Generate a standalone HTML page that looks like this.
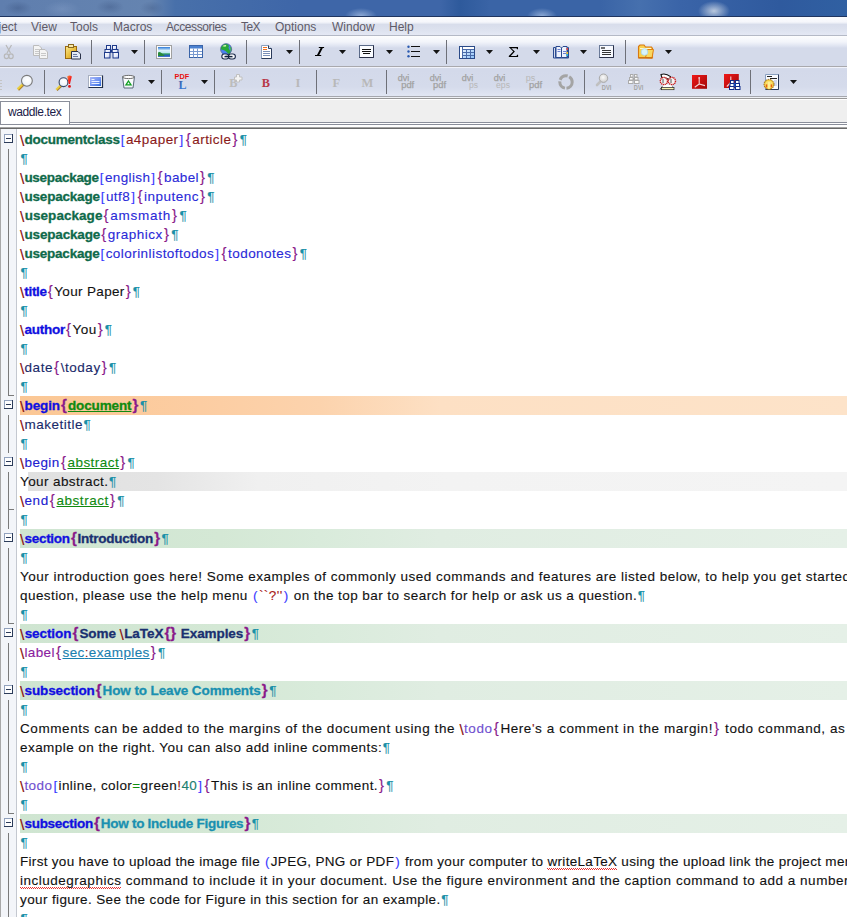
<!DOCTYPE html>
<html><head><meta charset="utf-8">
<style>
*{margin:0;padding:0;box-sizing:border-box}
html,body{width:847px;height:917px;overflow:hidden;background:#fff}
body{position:relative;font-family:"Liberation Sans",sans-serif}
.abs{position:absolute}
#title{left:0;top:0;width:847px;height:16px;
 background:
  radial-gradient(ellipse 16px 8px at 361px 16px,rgba(175,198,232,.7),rgba(175,198,232,0)),
  radial-gradient(ellipse 15px 8px at 542px 16px,rgba(175,198,232,.7),rgba(175,198,232,0)),
  radial-gradient(ellipse 16px 10px at 714px 11px,rgba(200,212,228,.9),rgba(200,212,228,0)),
  radial-gradient(ellipse 14px 7px at 18px 8px,rgba(60,85,130,.45),rgba(60,85,130,0)),
  radial-gradient(ellipse 14px 7px at 110px 7px,rgba(60,85,130,.4),rgba(60,85,130,0)),
  radial-gradient(ellipse 12px 7px at 152px 8px,rgba(60,85,130,.35),rgba(60,85,130,0)),
  radial-gradient(ellipse 18px 8px at 62px 9px,rgba(140,165,205,.35),rgba(140,165,205,0)),
  linear-gradient(90deg,#5f7eae 0,#6584b0 150px,#4870aa 175px,#3e66a8 300px,#3e66a8 440px,#2e5a9c 460px,#3a64a6 490px,#3a64a6 600px,#4670ae 640px,#3a64a8 680px,#2f5a9e 780px,#3060a2 847px);}
#tline{left:0;top:16px;width:847px;height:1px;background:#1f3560}
#menu{left:0;top:17px;width:847px;height:18px;background:linear-gradient(#fbfcfe 0px,#f5f6fb 5px,#e4e8f2 6.5px,#d8ddeb 7.5px,#dce1ee 12px,#e4e8f4 18px)}
#mline{left:0;top:35px;width:847px;height:1px;background:#b4b9c6}
.mi{position:absolute;top:20px;font-size:12px;color:#5f5b68;white-space:nowrap}
#tb1{left:0;top:36px;width:847px;height:30px;
 background:linear-gradient(#fdfdfe 0px,#f2f4fa 6px,#dfe4f1 10px,#d4dAea 12px,#d4daea 30px)}
#tb1line{left:0;top:66px;width:847px;height:1px;background:#a9a9ad}
#tb2{left:0;top:67px;width:847px;height:29px;background:linear-gradient(#f0f2fa 0px,#f0f2fa 1px,#d6dcec 1px,#d3d9ea 3px,#d5dbeb 20px,#e1e6f3 29px)}
#tb2line{left:0;top:96px;width:847px;height:1px;background:#a5a7ad}
#tabarea{left:0;top:97px;width:847px;height:30px;background:#fff}
.sep{position:absolute;width:1px;height:22px;background:#8a8e98}
.dd{position:absolute;width:0;height:0;border-left:3.5px solid transparent;border-right:3.5px solid transparent;border-top:4px solid #151515}
#editor{left:0;top:129px;width:847px;height:788px;background:#fff}
#gutter{left:0;top:129px;width:17px;height:788px;background:#f3f5f9;border-left:1px solid #a8a8a8;border-right:1px solid #c4c8d0}
.row{-webkit-text-stroke:0.12px currentColor;position:absolute;left:20px;height:19px;width:827px;white-space:pre;font-size:13.5px;line-height:19px;--d:0px;letter-spacing:calc(0.42px + var(--d));color:#111}

.row b{-webkit-text-stroke:0.3px currentColor;font-weight:bold;letter-spacing:calc(-0.25px + var(--d))}
.bs{color:#8a1010;font-size:15.5px;line-height:1px;position:relative;top:1.5px;padding-right:0;margin-right:-0.3px}
.dg{color:#0f6a4a}
.ob{color:#3a3aff;padding:0 0.97px}
.mr{color:#8a1a1a}
.pu{color:#8a1a8a;font-size:15px;line-height:1px;padding:0 1.1px}
.bl{color:#2a2ad8}
.kb{color:#1010e0}
.nv{color:#1a2a6a}
.bb{color:#2020d0}
.env{color:#108a10;text-decoration:underline}
.sn{color:#1a3070}
.lb{color:#8a20a0}
.ref{color:#1a80b0;text-decoration:underline}
.ss{color:#1a90b0}
.td{color:#7050d0}
.gr{color:#109010}
.tl{color:#208070}
.rd{color:#a82020}
.pm{color:#1a90a8;letter-spacing:0;padding-left:0.6px}
.sq{background-image:repeating-linear-gradient(90deg,#e83030 0 1px,transparent 1px 2px),repeating-linear-gradient(90deg,transparent 0 1px,#e83030 1px 2px);background-size:100% 1px,100% 1px;background-position:0 13.6px,0 14.6px;background-repeat:no-repeat;padding-bottom:3px}
.hl{position:absolute;height:19px}
</style></head>
<body>
<div id="title" class="abs"></div>
<div id="tline" class="abs"></div>
<div id="menu" class="abs"></div>
<div id="mline" class="abs"></div>
<div class="mi" style="left:-1.5px">ject</div>
<div class="mi" style="left:31px">View</div>
<div class="mi" style="left:70px">Tools</div>
<div class="mi" style="left:113px">Macros</div>
<div class="mi" style="left:166px;letter-spacing:-0.4px">Accessories</div>
<div class="mi" style="left:241px;letter-spacing:-0.6px">TeX</div>
<div class="mi" style="left:275px">Options</div>
<div class="mi" style="left:332px">Window</div>
<div class="mi" style="left:389px">Help</div>

<div id="tb1" class="abs"></div>
<div id="tb1line" class="abs"></div>
<div id="tb2" class="abs"></div>
<div id="tb2line" class="abs"></div>
<div id="tabarea" class="abs"></div>
<div class="abs" style="left:0;top:97px;width:847px;height:1px;background:#eef0f4"></div>
<div class="abs" style="left:0;top:98px;width:847px;height:1px;background:#979797"></div>
<div class="abs" style="left:70px;top:100px;width:777px;height:22px;background:#efefef"></div>
<div class="abs" style="left:69px;top:122px;width:778px;height:1px;background:#8a8e9a"></div>
<div class="abs" style="left:0;top:101px;width:70px;height:23px;background:#fff;border-left:1px solid #8a8e9a;border-top:1px solid #8a8e9a;border-right:1px solid #8a8e9a"></div>
<div class="abs" style="left:8px;top:105px;font-size:12px;letter-spacing:-0.4px;color:#1c1c48;white-space:nowrap">waddle.tex</div>
<div class="abs" style="left:0;top:124px;width:847px;height:1px;background:#8a8e9a"></div>
<div class="abs" style="left:0;top:127px;width:847px;height:1px;background:#a4a4a4"></div>
<div class="abs" style="left:0;top:128px;width:847px;height:1px;background:#6a6a6a"></div>

<!-- TOOLBAR -->
<svg class="abs" style="left:0;top:0" width="847" height="130" viewBox="0 0 847 130">
<defs>
 <linearGradient id="gSky" x1="0" y1="0" x2="0" y2="1"><stop offset="0" stop-color="#2a78d8"/><stop offset=".35" stop-color="#d8f0fa"/><stop offset=".55" stop-color="#c0e8f0"/><stop offset=".7" stop-color="#2a9a60"/><stop offset=".85" stop-color="#2a60c0"/><stop offset="1" stop-color="#4a7ad0"/></linearGradient>
 <linearGradient id="gBin" x1="0" y1="0" x2="0" y2="1"><stop offset="0" stop-color="#ffffff"/><stop offset="1" stop-color="#f0f4fa"/></linearGradient>
 <linearGradient id="gWin" x1="0" y1="0" x2="1" y2="1"><stop offset="0" stop-color="#a8b8f8"/><stop offset=".6" stop-color="#6a8ef0"/><stop offset="1" stop-color="#2a68d8"/></linearGradient>
 <linearGradient id="gBarrel" x1="0" y1="0" x2="1" y2="1"><stop offset="0" stop-color="#ffffff"/><stop offset=".6" stop-color="#e8ecfa"/><stop offset="1" stop-color="#9aa8e8"/></linearGradient>
 <linearGradient id="gCell" x1="0" y1="0" x2="1" y2="1"><stop offset="0" stop-color="#ffffff"/><stop offset="1" stop-color="#8ac0f8"/></linearGradient>
 <linearGradient id="gGold" x1="0" y1="0" x2="1" y2="1"><stop offset="0" stop-color="#fae890"/><stop offset=".5" stop-color="#eac040"/><stop offset="1" stop-color="#c89020"/></linearGradient>
 <linearGradient id="gRed" x1="0" y1="0" x2="1" y2="1"><stop offset="0" stop-color="#f01818"/><stop offset="1" stop-color="#a00808"/></linearGradient>
 <linearGradient id="gL" x1="0" y1="0" x2="0" y2="1"><stop offset="0" stop-color="#3a58a0"/><stop offset="1" stop-color="#3a80e0"/></linearGradient>
 <radialGradient id="gLens" cx=".55" cy=".4" r=".65"><stop offset="0" stop-color="#ffffff"/><stop offset=".7" stop-color="#f0f4fa"/><stop offset="1" stop-color="#c8d8f0"/></radialGradient>
 <radialGradient id="gLensG" cx=".45" cy=".4" r=".7"><stop offset="0" stop-color="#fafafa"/><stop offset="1" stop-color="#c8c8c8"/></radialGradient>
 <linearGradient id="gHandle" x1="0" y1="0" x2="1" y2="1"><stop offset="0" stop-color="#d8d860"/><stop offset=".5" stop-color="#f0c838"/><stop offset="1" stop-color="#603010"/></linearGradient>
 <linearGradient id="gExcl" x1="0" y1="0" x2="1" y2="1"><stop offset="0" stop-color="#f89040"/><stop offset=".6" stop-color="#f81818"/><stop offset="1" stop-color="#c01010"/></linearGradient>
 <linearGradient id="gFolder" x1="0" y1="0" x2="0" y2="1"><stop offset="0" stop-color="#fcd890"/><stop offset="1" stop-color="#e89828"/></linearGradient>
</defs>
<!-- separators -->
<g fill="#6e7078">
 <rect x="91" y="40" width="1" height="24"/><rect x="144" y="40" width="1" height="24"/>
 <rect x="246" y="40" width="1" height="24"/><rect x="299" y="40" width="1" height="24"/>
 <rect x="446" y="40" width="1" height="24"/><rect x="625" y="40" width="1" height="24"/>
 <rect x="44" y="70" width="1" height="24"/><rect x="161" y="70" width="1" height="24"/>
 <rect x="214" y="70" width="1" height="24"/><rect x="316" y="70" width="1" height="24"/>
 <rect x="386" y="70" width="1" height="24"/><rect x="584" y="70" width="1" height="24"/>
 <rect x="750" y="70" width="1" height="24"/>
</g>
<!-- dropdown arrows -->
<g fill="#141414">
 <path d="M131 50h7l-3.5 4z"/><path d="M286 50h7l-3.5 4z"/><path d="M339 50h7l-3.5 4z"/>
 <path d="M386 50h7l-3.5 4z"/><path d="M433 50h7l-3.5 4z"/><path d="M486 50h7l-3.5 4z"/>
 <path d="M533 50h7l-3.5 4z"/><path d="M580 50h7l-3.5 4z"/><path d="M665 50h7l-3.5 4z"/>
 <path d="M148 80h7l-3.5 4z"/><path d="M201 80h7l-3.5 4z"/><path d="M790 80h7l-3.5 4z"/>
</g>
<!-- scissors disabled -->
<g fill="none" stroke="#b8b8b8" stroke-width="1.2">
 <path d="M6 45 L10.5 53 M11.5 45 L7 53"/>
 <ellipse cx="6.5" cy="56.3" rx="2.2" ry="2.4"/><ellipse cx="11" cy="56.3" rx="2.2" ry="2.4"/>
</g>
<!-- copy disabled -->
<g stroke="#bcbcbc" stroke-width="1" fill="#f4f4f4">
 <path d="M33.5 45.5h5.5l2.5 2.5v7.5h-8z"/>
 <path d="M39.5 49.5h5.5l2.5 2.5v6.5h-8z"/>
</g>
<g stroke="#c8c8c8" stroke-width="1"><path d="M35 49.5h4M35 51.5h4M35 53.5h4M41 53.5h5M41 55.5h5"/></g>
<!-- paste -->
<rect x="65.5" y="46.5" width="11" height="12" fill="url(#gGold)" stroke="#9a6a10"/>
<rect x="68.5" y="44.5" width="5" height="3" fill="#f8e8a8" stroke="#8a6a20"/>
<path d="M71.5 51.5h6.5l2.5 2.5v5h-9z" fill="#e4ecf8" stroke="#2a3248"/>
<path d="M73 54.5h4M73 56.5h5" stroke="#6a7aa0"/>
<!-- binoculars -->
<g stroke="#1e3a8a" stroke-width="1" fill="url(#gBarrel)">
 <rect x="106.5" y="45.5" width="4" height="4"/><rect x="112.5" y="45.5" width="4" height="4"/>
 <rect x="105" y="49.5" width="5.5" height="3"/><rect x="112" y="49.5" width="6" height="3"/>
 <rect x="104.5" y="52.5" width="5.5" height="5.5"/><rect x="113" y="52.5" width="5.5" height="5.5"/>
</g>
<rect x="110" y="50" width="2.5" height="2.5" fill="#1e3a8a"/>
<!-- image -->
<rect x="156.5" y="45.5" width="15" height="13" fill="#fcfcfc" stroke="#a0a0a0"/>
<rect x="158" y="47" width="12" height="10" fill="url(#gSky)"/>
<path d="M158 52.5q2 -1.5 4 1 l3 2.5h-7z" fill="#2a8a3a"/>
<!-- table -->
<rect x="189.5" y="45.5" width="13" height="12" fill="#fff" stroke="#3a64a8"/>
<rect x="190" y="46" width="12" height="2.5" fill="#4a80d0"/>
<path d="M190 51.5h12M190 54.5h12M193.5 48.5v9M197.5 48.5v9" stroke="#7a9ad0"/>
<!-- globe with chain -->
<circle cx="226.1" cy="49.2" r="5.6" fill="#4a80f0"/>
<path d="M221 47.5q1.5 -3.5 5 -3.5 q2.5 0 3 2 q-1 1.5 0 3 l1.5 2.5 q0 2 -1.5 3 q-1.5 -2 -3.5 -3.5 q-2 -1.5 -4.5 -1.5z" fill="#28a838"/>
<path d="M222.5 46.2q1.5 -1.5 3.5 -1.2 q.8 1 -.8 1.8z" fill="#d0f8b0"/>
<path d="M230 47q1.5 2 .8 4" stroke="#40c040" stroke-width="1.2" fill="none"/>
<circle cx="226.1" cy="49.2" r="5.6" fill="none" stroke="#4a5a7a" stroke-width=".6"/>
<g fill="#f4f6fa" stroke="#1a2a48" stroke-width="1.1"><rect x="221.8" y="54" width="7" height="5" rx="2.5"/><rect x="228.4" y="54" width="7" height="5" rx="2.5"/></g>
<path d="M224.5 56.5h8" stroke="#10203a" stroke-width="1.6"/>
<path d="M223.5 55.3h2M230 55.3h3.5" stroke="#fff" stroke-width=".8"/>
<!-- document -->
<path d="M261.5 45.5h7l3 3v10h-10z" fill="#fff" stroke="#8aa0c0"/>
<path d="M271.5 48.5v10h-10" fill="none" stroke="#2a3a5a"/>
<path d="M268.5 45.5v3h3" fill="#dde4ee" stroke="#2a3a5a"/>
<path d="M263 47.5h4M263 49.5h4" stroke="#f07020" stroke-width="1.1"/>
<path d="M263 51.5h7M263 53.5h7M263 55.5h7" stroke="#7a90b8"/>
<!-- italic I -->
<path d="M318.8 47h5.3v1h-5.3z M315 55h6.2v1h-6.2z M320.6 48h2.2l-3.6 7h-2.2z" fill="#000"/>
<!-- align box -->
<rect x="359.5" y="45.5" width="14" height="12" fill="#fafcff" stroke="#5a6a88"/>
<path d="M373.5 45.5v12h-14" fill="none" stroke="#2a3048"/>
<path d="M362 49.5h9M362 51.5h9M363 53.5h7" stroke="#111"/>
<!-- list -->
<g fill="#2a5ab0"><circle cx="408.5" cy="46.8" r="1.2"/><circle cx="408.5" cy="51.5" r="1.2"/><circle cx="408.5" cy="56.2" r="1.2"/></g>
<path d="M411 46.5h9M411 51.5h9M411 56.5h9" stroke="#111" stroke-width="1.2"/>
<!-- table blue -->
<rect x="459.5" y="46.5" width="15" height="12" fill="url(#gCell)" stroke="#2a4a88"/>
<path d="M460 49.5h14M460 52.5h14M460 55.5h14M462.5 47v11M466.5 49v9M470.5 49v9" stroke="#4a6aa8" stroke-width="1"/>
<rect x="460" y="47" width="2" height="11" fill="#fff"/>
<rect x="463" y="47" width="11" height="2" fill="#fff"/>
<!-- sigma -->
<path d="M509 47h9v2.2h-.9l-.6-1h-5.2l3.6 3.4-4.1 4.3h5.7l.7-1.2h.9v2.3h-9.3v-.9l4.4-4.6-4.4-4.5z" fill="#000"/>
<!-- book -->
<path d="M553.5 47.5h2v10h12v-10h1v10.5h-15z" fill="none" stroke="#2a4a90"/>
<path d="M556 46.5h4l1.5 1.5v9.5h-5.5z" fill="#eef2fc" stroke="#2a4a90"/>
<path d="M561.5 48l1.5 -1.5h4v11h-5.5z" fill="#eef2fc" stroke="#2a4a90"/>
<path d="M557.5 49.5h3M557.5 51.5h3M563 51.5h3M563 53.5h3" stroke="#6a80d0"/>
<rect x="566.5" y="48" width="1.5" height="2" fill="#e04040"/><rect x="566.5" y="52" width="1.5" height="2" fill="#f0c020"/><rect x="566.5" y="54" width="1.5" height="2" fill="#20b0e0"/>
<!-- lines box -->
<rect x="599.5" y="45.5" width="14" height="12" fill="#f8faff" stroke="#6a7a98"/>
<path d="M613.5 45.5v12h-14" fill="none" stroke="#2a3048"/>
<path d="M601 48h4" stroke="#111" stroke-width="1.2"/>
<path d="M602 50.5h9M602 52.5h9M602 54.5h9" stroke="#333"/>
<!-- folder -->
<path d="M638.5 46.5l1.5 -1.5h4l1.5 2h6l1 1.5v9.5h-14z" fill="#f8d050" stroke="#d87810" stroke-width="1.1"/>
<path d="M640 48.5h11" stroke="#fff8d0" stroke-width="1"/>
<path d="M645.5 57.5l2 -8h6l-1.5 8.5z" fill="#f8d860" stroke="#e08010" stroke-width="1"/>
<circle cx="644.5" cy="52" r="3.3" fill="#d8f4fc" stroke="#a8d8f0" stroke-width=".8"/>
<path d="M639 57.8h13" stroke="#c86808" stroke-width="1.1"/>
<!-- TB2 -->
<g fill="#c4c4c4"><rect x="0" y="80" width="2" height="1"/><rect x="0" y="83" width="2" height="1"/><rect x="0" y="86" width="2" height="1"/><rect x="0" y="89" width="2" height="1"/></g>
<!-- magnifier -->
<path d="M19 88.5l3.5 -3.5" stroke="url(#gHandle)" stroke-width="3.2" stroke-linecap="square"/>
<circle cx="26.9" cy="80.8" r="5.4" fill="url(#gLens)" stroke="#7a7a7a" stroke-width="1.1"/>
<!-- magnifier ! -->
<path d="M57.5 89l3 -3" stroke="url(#gHandle)" stroke-width="3" stroke-linecap="square"/>
<circle cx="63.5" cy="82.2" r="4.4" fill="url(#gLens)" stroke="#3a4a68" stroke-width="1.1"/>
<path d="M67.2 76.5q2.3 -2 4.6 0l-1.8 7.5h-1.2z" fill="url(#gExcl)"/>
<circle cx="69.5" cy="86.4" r="1.4" fill="#e01818"/>
<!-- blue window -->
<rect x="88.5" y="75.5" width="14" height="12" fill="#fff" stroke="#a8b0c0"/>
<path d="M102.5 75.5v12h-14" fill="none" stroke="#22304a" stroke-width="1.2"/>
<rect x="90" y="77" width="11" height="9" fill="url(#gWin)"/>
<path d="M91.5 79.5h3M91.5 81.5h8M91.5 83.5h8" stroke="#e8f0ff"/>
<!-- recycle bin -->
<path d="M122.5 76.5h12l-1.5 11.5h-9z" fill="url(#gBin)" stroke="#5a6a7a"/>
<ellipse cx="128.5" cy="77" rx="6" ry="1.6" fill="#fff" stroke="#6a6a6a"/>
<path d="M128.5 81l2.5 3.8h-5z" fill="none" stroke="#10a020" stroke-width="1.3"/>
<!-- PDF L -->
<text x="174.6" y="79.1" font-family="Liberation Sans" font-weight="bold" font-size="7.6" fill="#e81010" textLength="14.6" lengthAdjust="spacingAndGlyphs">PDF</text>
<text x="178.5" y="88.8" font-family="Liberation Serif" font-weight="bold" font-size="12" fill="url(#gL)">L</text>
<!-- B+ disabled -->
<text x="229.3" y="86.8" font-family="Liberation Serif" font-weight="bold" font-size="12.3" fill="#bcbcbc">B</text>
<path d="M236.5 74.5h3v2.5h2.5v3h-2.5v2h-3v-2h-2v-3h2z" fill="#f4f4f4" stroke="#c0c0c0"/>
<!-- B red -->
<text x="261.8" y="86.8" font-family="Liberation Serif" font-weight="bold" font-size="12.3" fill="#b83848">B</text>
<text x="295.5" y="86.6" font-family="Liberation Serif" font-weight="bold" font-size="12.5" fill="#b8b8b8">I</text>
<text x="332.5" y="86.6" font-family="Liberation Serif" font-weight="bold" font-size="12.5" fill="#b8b8b8">F</text>
<text x="361.5" y="86.6" font-family="Liberation Serif" font-weight="bold" font-size="12.5" fill="#b8b8b8">M</text>
<!-- dvi labels -->
<g font-family="Liberation Sans" font-size="8.5" fill="#a2a2a2" stroke="#a2a2a2" stroke-width=".25">
 <text x="397.8" y="80.6" textLength="11.5" lengthAdjust="spacingAndGlyphs">dvi</text><text x="401.2" y="87.6" textLength="13" lengthAdjust="spacingAndGlyphs">pdf</text>
 <text x="429.8" y="80.6" textLength="11.5" lengthAdjust="spacingAndGlyphs">dvi</text><text x="433" y="87.6" textLength="13" lengthAdjust="spacingAndGlyphs">pdf</text>
 <text x="461.8" y="80.6" textLength="11.5" lengthAdjust="spacingAndGlyphs">dvi</text><text x="469" y="87.6" fill="#b8b8b8" stroke="none" textLength="9" lengthAdjust="spacingAndGlyphs">ps</text>
 <text x="493.8" y="80.6" textLength="11.5" lengthAdjust="spacingAndGlyphs">dvi</text><text x="496" y="87.6" fill="#b8b8b8" stroke="none" textLength="14" lengthAdjust="spacingAndGlyphs">eps</text>
 <text x="525.7" y="80.6" fill="#b8b8b8" stroke="none" textLength="9.5" lengthAdjust="spacingAndGlyphs">ps</text><text x="529" y="87.6" textLength="13" lengthAdjust="spacingAndGlyphs">pdf</text>
</g>
<circle cx="566" cy="82" r="6.2" fill="none" stroke="#a4a4a4" stroke-width="3" stroke-dasharray="9 1.6"/>
<!-- magnifier DVI disabled -->
<path d="M597 85l3 -3" stroke="#c0c0c0" stroke-width="2.6" stroke-linecap="round"/>
<circle cx="603.5" cy="78.2" r="4.2" fill="url(#gLensG)" stroke="#a8a8a8"/>
<text x="601.8" y="89.8" font-family="Liberation Sans" font-weight="bold" font-size="6.5" fill="#a4a4a4" textLength="9.5" lengthAdjust="spacingAndGlyphs">DVI</text>
<!-- binoculars DVI disabled -->
<g fill="#fafafa" stroke="#ababab" stroke-width="1">
 <rect x="630.5" y="74.5" width="2.5" height="2.5"/><rect x="634.5" y="74.5" width="2.5" height="2.5"/>
 <rect x="629.5" y="77.5" width="3.5" height="2.5"/><rect x="634.5" y="77.5" width="3.5" height="2.5"/>
 <rect x="628.5" y="80.5" width="4.5" height="3"/><rect x="634.5" y="80.5" width="4.5" height="3"/>
</g>
<rect x="633" y="78" width="1.5" height="2.5" fill="#a8a8a8"/>
<text x="633.8" y="89.8" font-family="Liberation Sans" font-weight="bold" font-size="6.5" fill="#a4a4a4" textLength="9.5" lengthAdjust="spacingAndGlyphs">DVI</text>
<!-- red glasses -->
<path d="M661 74.5 q5 -1.5 9.5 2.2 l-1 3 q-3 -2 -7.5 -1.5z" fill="#fff" stroke="#111" stroke-width="1.1"/>
<path d="M663 85.5 l-2.8 4 M672 85.5 l1.2 3" stroke="#222" stroke-width="1"/>
<path d="M662.5 85q5 -1 10 0v2.5h-10z" fill="#fff"/>
<rect x="661.5" y="87.5" width="12.5" height="2.2" fill="#f8f4b0" stroke="#222" stroke-width=".7"/>
<circle cx="663.9" cy="81" r="3.6" fill="#f4f4f4" stroke="#c81818" stroke-width="1.4" stroke-dasharray="1.2 .6"/>
<circle cx="671.9" cy="81" r="3.6" fill="#f4f4f4" stroke="#c81818" stroke-width="1.4" stroke-dasharray="1.2 .6"/>
<path d="M663 79v4M671 79v4" stroke="#444" stroke-width=".9"/>
<!-- adobe -->
<rect x="692" y="75" width="15" height="13.8" fill="url(#gRed)"/>
<path d="M699.2 77.8v6.2 M699.2 84l-4.5 3.2 M699.2 84l5.8 1.6" fill="none" stroke="#f4d4d4" stroke-width="1.1"/>
<circle cx="699.2" cy="77.8" r=".9" fill="#f0c8d0"/>
<!-- adobe binoculars -->
<rect x="724" y="74" width="14.8" height="14" fill="url(#gRed)"/>
<path d="M730.8 76.5v6 M730.8 82.5l-4 4" fill="none" stroke="#f4d4d4" stroke-width="1.1"/>
<g stroke="#102a88" stroke-width="1" fill="#ffffff">
 <rect x="730.5" y="80.5" width="3.5" height="3"/><rect x="735.5" y="80.5" width="3.5" height="3"/>
 <rect x="730" y="83.5" width="4" height="3"/><rect x="735.5" y="83.5" width="4" height="3"/>
 <rect x="729.5" y="86.5" width="4.5" height="3"/><rect x="735.5" y="86.5" width="4.5" height="3"/>
</g>
<rect x="734" y="83" width="1.5" height="4" fill="#1a4ab8"/>
<!-- gear doc -->
<path d="M765.5 74.5h13v15h-13z" fill="#f8faff" stroke="#8aa0c0"/>
<path d="M778.5 74.5v15h-13" fill="none" stroke="#2a3a5a"/>
<path d="M767 76.5h5M770 78.5h7" stroke="#222" stroke-width="1.1"/>
<path d="M774 81h3M774 83h3M774 85h3" stroke="#a8b8e0"/>
<g transform="translate(769,84.4)">
 <circle r="5" fill="#f0c838" stroke="#8a5a10" stroke-width=".9" stroke-dasharray="1.6 .8"/>
 <circle r="3.6" fill="#f8e070"/>
 <rect x="-.8" y="-2.5" width="1.6" height="7" fill="#fff4a0"/>
 <rect x="-3.2" y="0" width="1.5" height="3" fill="#e86010"/><rect x="1.7" y="0" width="1.5" height="3" fill="#e86010"/>
</g>
</svg>

<!-- /TOOLBAR -->
<div id="editor" class="abs"></div>
<div id="gutter" class="abs"></div>
<!-- GUTTER -->
<svg class="abs" style="left:0;top:129px" width="20" height="788" viewBox="0 129 20 788">
<g fill="#7a7a7a">
<rect x="8" y="149" width="1" height="247"/>
<rect x="8" y="415" width="1" height="38"/>
<rect x="8" y="472" width="1" height="57"/>
<rect x="8" y="548" width="1" height="76"/>
<rect x="8" y="643" width="1" height="38"/>
<rect x="8" y="700" width="1" height="114"/>
<rect x="8" y="833" width="1" height="84"/>
<rect x="8" y="395" width="6" height="1"/>
<rect x="8" y="509" width="6" height="1"/>
<rect x="8" y="623" width="6" height="1"/>
<rect x="8" y="813" width="6" height="1"/>
</g>
<rect x="4" y="134" width="9" height="9" fill="#2c3c5a"/><rect x="4" y="134" width="8" height="8" fill="#92a2be"/><rect x="5" y="135" width="7" height="7" fill="#fdfdfe"/><rect x="6" y="138" width="5" height="1" fill="#2a3a58"/>
<rect x="4" y="400" width="9" height="9" fill="#2c3c5a"/><rect x="4" y="400" width="8" height="8" fill="#92a2be"/><rect x="5" y="401" width="7" height="7" fill="#fdfdfe"/><rect x="6" y="404" width="5" height="1" fill="#2a3a58"/>
<rect x="4" y="457" width="9" height="9" fill="#2c3c5a"/><rect x="4" y="457" width="8" height="8" fill="#92a2be"/><rect x="5" y="458" width="7" height="7" fill="#fdfdfe"/><rect x="6" y="461" width="5" height="1" fill="#2a3a58"/>
<rect x="4" y="533" width="9" height="9" fill="#2c3c5a"/><rect x="4" y="533" width="8" height="8" fill="#92a2be"/><rect x="5" y="534" width="7" height="7" fill="#fdfdfe"/><rect x="6" y="537" width="5" height="1" fill="#2a3a58"/>
<rect x="4" y="628" width="9" height="9" fill="#2c3c5a"/><rect x="4" y="628" width="8" height="8" fill="#92a2be"/><rect x="5" y="629" width="7" height="7" fill="#fdfdfe"/><rect x="6" y="632" width="5" height="1" fill="#2a3a58"/>
<rect x="4" y="685" width="9" height="9" fill="#2c3c5a"/><rect x="4" y="685" width="8" height="8" fill="#92a2be"/><rect x="5" y="686" width="7" height="7" fill="#fdfdfe"/><rect x="6" y="689" width="5" height="1" fill="#2a3a58"/>
<rect x="4" y="818" width="9" height="9" fill="#2c3c5a"/><rect x="4" y="818" width="8" height="8" fill="#92a2be"/><rect x="5" y="819" width="7" height="7" fill="#fdfdfe"/><rect x="6" y="822" width="5" height="1" fill="#2a3a58"/>
</svg>
<!-- /GUTTER -->
<div class="hl" style="left:20px;top:396px;width:827px;background:linear-gradient(90deg,#fbc794 0,#fccda2 180px,#fcd3ad 300px,#fde0c4 420px,#fde3c9 100%)"></div>
<div class="hl" style="left:28px;top:472px;width:819px;background:linear-gradient(90deg,#e0e0e0 0,#e4e4e4 130px,#f0f0f0 230px,#f3f3f3 420px,#f4f4f4 100%)"></div>
<div class="hl" style="left:20px;top:529px;width:827px;background:linear-gradient(90deg,#cfe5d1 0,#d4e8d5 200px,#d9ebdb 300px,#e0ede2 420px,#e5f0e7 100%)"></div>
<div class="hl" style="left:20px;top:624px;width:827px;background:linear-gradient(90deg,#cfe5d1 0,#d4e8d5 200px,#d9ebdb 300px,#e0ede2 420px,#e5f0e7 100%)"></div>
<div class="hl" style="left:20px;top:681px;width:827px;background:linear-gradient(90deg,#cfe5d1 0,#d4e8d5 200px,#d9ebdb 300px,#e0ede2 420px,#e5f0e7 100%)"></div>
<div class="hl" style="left:20px;top:814px;width:827px;background:linear-gradient(90deg,#cfe5d1 0,#d4e8d5 200px,#d9ebdb 300px,#e0ede2 420px,#e5f0e7 100%)"></div>
<div class="row" style="top:130px;--d:0.020px"><span class="bs">\</span><b class="dg">documentclass</b><span class="ob">[</span><span class="mr">a4paper</span><span class="ob">]</span><span class="pu">{</span><span class="mr">article</span><span class="pu">}</span><span class="pm">¶</span></div>
<div class="row" style="top:149px"><span class="pm">¶</span></div>
<div class="row" style="top:168px;--d:-0.039px"><span class="bs">\</span><b class="dg">usepackage</b><span class="ob">[</span><span class="bl">english</span><span class="ob">]</span><span class="pu">{</span><span class="bl">babel</span><span class="pu">}</span><span class="pm">¶</span></div>
<div class="row" style="top:187px;--d:0.044px"><span class="bs">\</span><b class="dg">usepackage</b><span class="ob">[</span><span class="bl">utf8</span><span class="ob">]</span><span class="pu">{</span><span class="bl">inputenc</span><span class="pu">}</span><span class="pm">¶</span></div>
<div class="row" style="top:206px;--d:0.290px"><span class="bs">\</span><b class="dg">usepackage</b><span class="pu">{</span><span class="bl">amsmath</span><span class="pu">}</span><span class="pm">¶</span></div>
<div class="row" style="top:225px;--d:0.079px"><span class="bs">\</span><b class="dg">usepackage</b><span class="pu">{</span><span class="bl">graphicx</span><span class="pu">}</span><span class="pm">¶</span></div>
<div class="row" style="top:244px;--d:0.026px"><span class="bs">\</span><b class="dg">usepackage</b><span class="ob">[</span><span class="bl">colorinlistoftodos</span><span class="ob">]</span><span class="pu">{</span><span class="bl">todonotes</span><span class="pu">}</span><span class="pm">¶</span></div>
<div class="row" style="top:263px"><span class="pm">¶</span></div>
<div class="row" style="top:282px;--d:-0.082px"><span class="bs">\</span><b class="kb">title</b><span class="pu">{</span>Your Paper<span class="pu">}</span><span class="pm">¶</span></div>
<div class="row" style="top:301px"><span class="pm">¶</span></div>
<div class="row" style="top:320px;--d:0.001px"><span class="bs">\</span><b class="kb">author</b><span class="pu">{</span>You<span class="pu">}</span><span class="pm">¶</span></div>
<div class="row" style="top:339px"><span class="pm">¶</span></div>
<div class="row" style="top:358px;--d:0.115px"><span class="bs">\</span><span class="nv">date</span><span class="pu">{</span><span class="nv">\today</span><span class="pu">}</span><span class="pm">¶</span></div>
<div class="row" style="top:377px"><span class="pm">¶</span></div>
<div class="row" style="top:396px;--d:0.131px"><span class="bs">\</span><b class="kb">begin</b><b class="pu">{</b><b class="env">document</b><b class="pu">}</b><span class="pm">¶</span></div>
<div class="row" style="top:415px;--d:0.070px"><span class="bs">\</span><span class="nv">maketitle</span><span class="pm">¶</span></div>
<div class="row" style="top:434px"><span class="pm">¶</span></div>
<div class="row" style="top:453px;--d:0.039px"><span class="bs">\</span><span class="bb">begin</span><span class="pu">{</span><span class="env">abstract</span><span class="pu">}</span><span class="pm">¶</span></div>
<div class="row" style="top:472px;--d:-0.025px">Your abstract.<span class="pm">¶</span></div>
<div class="row" style="top:491px;--d:0.119px"><span class="bs">\</span><span class="bb">end</span><span class="pu">{</span><span class="env">abstract</span><span class="pu">}</span><span class="pm">¶</span></div>
<div class="row" style="top:510px"><span class="pm">¶</span></div>
<div class="row" style="top:529px;--d:-0.020px"><span class="bs">\</span><b class="kb">section</b><b class="pu">{</b><b class="sn">Introduction</b><b class="pu">}</b><span class="pm">¶</span></div>
<div class="row" style="top:548px"><span class="pm">¶</span></div>
<div class="row" style="top:567px;--d:0.082px">Your introduction goes here! Some examples of commonly used commands and features are listed below, to help you get started on writing your paper.</div>
<div class="row" style="top:586px;--d:0.011px">question, please use the help menu <span class="ob">(</span><span class="rd">``?''</span><span class="ob">)</span> on the top bar to search for help or ask us a question.<span class="pm">¶</span></div>
<div class="row" style="top:605px"><span class="pm">¶</span></div>
<div class="row" style="top:624px;--d:0.180px"><span class="bs">\</span><b class="kb">section</b><b class="pu">{</b><b class="sn">Some </b><span class="bs">\</span><b class="sn">LaTeX</b><b class="pu">{}</b><b class="sn"> Examples</b><b class="pu">}</b><span class="pm">¶</span></div>
<div class="row" style="top:643px;--d:-0.028px"><span class="bs">\</span><span class="lb">label</span><span class="pu">{</span><span class="ref">sec<span class="mr">:</span>examples</span><span class="pu">}</span><span class="pm">¶</span></div>
<div class="row" style="top:662px"><span class="pm">¶</span></div>
<div class="row" style="top:681px;--d:0.134px"><span class="bs">\</span><b class="kb">subsection</b><b class="pu">{</b><b class="ss">How to Leave Comments</b><b class="pu">}</b><span class="pm">¶</span></div>
<div class="row" style="top:700px"><span class="pm">¶</span></div>
<div class="row" style="top:719px;--d:0.158px">Comments can be added to the margins of the document using the <span class="bs">\</span><span class="td">todo</span><span class="pu">{</span>Here<span class="mr">'</span>s a comment in the margin!<span class="pu">}</span> todo command, as shown in the</div>
<div class="row" style="top:738px;--d:0.024px">example on the right. You can also add inline comments:<span class="pm">¶</span></div>
<div class="row" style="top:757px"><span class="pm">¶</span></div>
<div class="row" style="top:776px;--d:0.001px"><span class="bs">\</span><span class="td">todo</span><span class="ob">[</span>inline, color<span class="gr">=</span>green<span class="mr">!</span><span class="tl">40</span><span class="ob">]</span><span class="pu">{</span>This is an inline comment.<span class="pu">}</span><span class="pm">¶</span></div>
<div class="row" style="top:795px"><span class="pm">¶</span></div>
<div class="row" style="top:814px;--d:-0.019px"><span class="bs">\</span><b class="kb">subsection</b><b class="pu">{</b><b class="ss">How to Include Figures</b><b class="pu">}</b><span class="pm">¶</span></div>
<div class="row" style="top:833px"><span class="pm">¶</span></div>
<div class="row" style="top:852px;--d:-0.116px">First you have to upload the image file <span class="ob">(</span>JPEG, PNG or PDF<span class="ob">)</span> from your computer to <span class="sq">writeLaTeX</span> using the upload link the project menu. Then use the</div>
<div class="row" style="top:871px;--d:0.088px"><span class="sq">includegraphics</span> command to include it in your document. Use the figure environment and the caption command to add a number and a caption to</div>
<div class="row" style="top:890px;--d:-0.040px">your figure. See the code for Figure in this section for an example.<span class="pm">¶</span></div>
<div class="row" style="top:909px"><span class="pm">¶</span></div>
</body></html>
